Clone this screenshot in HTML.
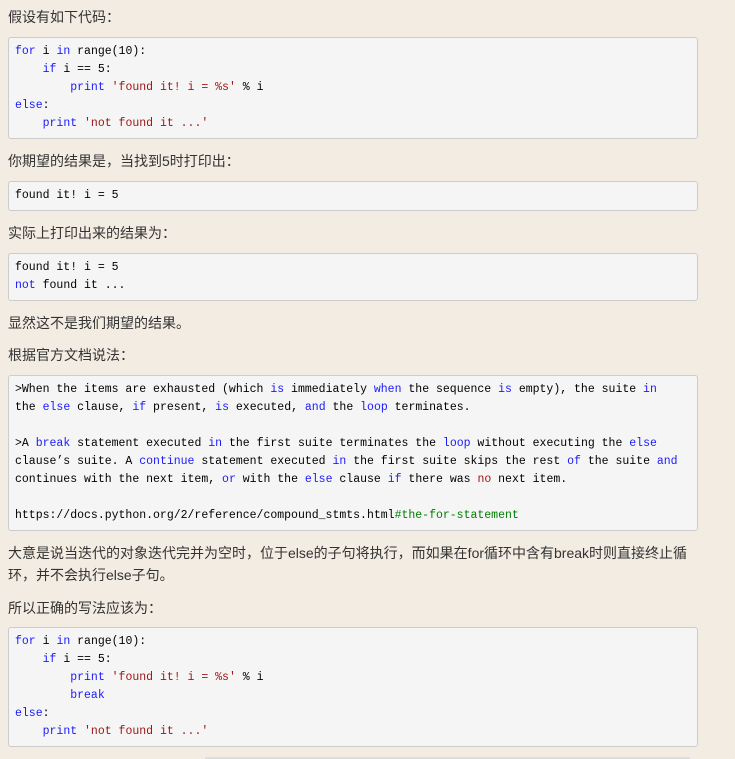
<!DOCTYPE html>
<html><head><meta charset="utf-8"><style>
body{margin:0;width:735px;height:759px;background:#f3ece3;overflow:hidden;position:relative;font-family:"Liberation Sans","Noto Sans CJK SC",sans-serif;}
.t{position:absolute;left:8px;font-size:14px;color:#333;line-height:22px;width:700px}
pre{position:absolute;left:8px;width:676px;margin:0;background:#f5f5f5;border:1px solid #ccc;border-radius:3px;padding:5px 6px;font-family:"Liberation Mono",monospace;font-size:11.5px;line-height:18px;color:#000;white-space:pre}
.k{color:#1a1aff}.s{color:#a31515}.g{color:#008000}
</style></head><body>
<div class="t" style="top:6px">假设有如下代码：</div>
<pre style="top:37px;height:90px"><span class="k">for</span> i <span class="k">in</span> range(10):
    <span class="k">if</span> i == 5:
        <span class="k">print</span> <span class="s">'found it! i = %s'</span> % i
<span class="k">else</span>:
    <span class="k">print</span> <span class="s">'not found it ...'</span></pre>
<div class="t" style="top:150px">你期望的结果是，当找到5时打印出：</div>
<pre style="top:181px;height:18px">found it! i = 5</pre>
<div class="t" style="top:222px">实际上打印出来的结果为：</div>
<pre style="top:253px;height:36px">found it! i = 5
<span class="k">not</span> found it ...</pre>
<div class="t" style="top:312px">显然这不是我们期望的结果。</div>
<div class="t" style="top:344px">根据官方文档说法：</div>
<pre style="top:375px;height:144px">&gt;When the items are exhausted (which <span class="k">is</span> immediately <span class="k">when</span> the sequence <span class="k">is</span> empty), the suite <span class="k">in</span>
the <span class="k">else</span> clause, <span class="k">if</span> present, <span class="k">is</span> executed, <span class="k">and</span> the <span class="k">loop</span> terminates.

&gt;A <span class="k">break</span> statement executed <span class="k">in</span> the first suite terminates the <span class="k">loop</span> without executing the <span class="k">else</span>
clause’s suite. A <span class="k">continue</span> statement executed <span class="k">in</span> the first suite skips the rest <span class="k">of</span> the suite <span class="k">and</span>
continues with the next item, <span class="k">or</span> with the <span class="k">else</span> clause <span class="k">if</span> there was <span class="s">no</span> next item.

https://docs.python.org/2/reference/compound_stmts.html<span class="g">#the-for-statement</span></pre>
<div class="t" style="top:542px">大意是说当迭代的对象迭代完并为空时，位于else的子句将执行，而如果在for循环中含有break时则直接终止循环，并不会执行else子句。</div>
<div class="t" style="top:597px">所以正确的写法应该为：</div>
<pre style="top:627px;height:108px"><span class="k">for</span> i <span class="k">in</span> range(10):
    <span class="k">if</span> i == 5:
        <span class="k">print</span> <span class="s">'found it! i = %s'</span> % i
        <span class="k">break</span>
<span class="k">else</span>:
    <span class="k">print</span> <span class="s">'not found it ...'</span></pre>
<div style="position:absolute;left:205px;top:757px;width:485px;height:2px;background:#ddd"></div>
</body></html>
